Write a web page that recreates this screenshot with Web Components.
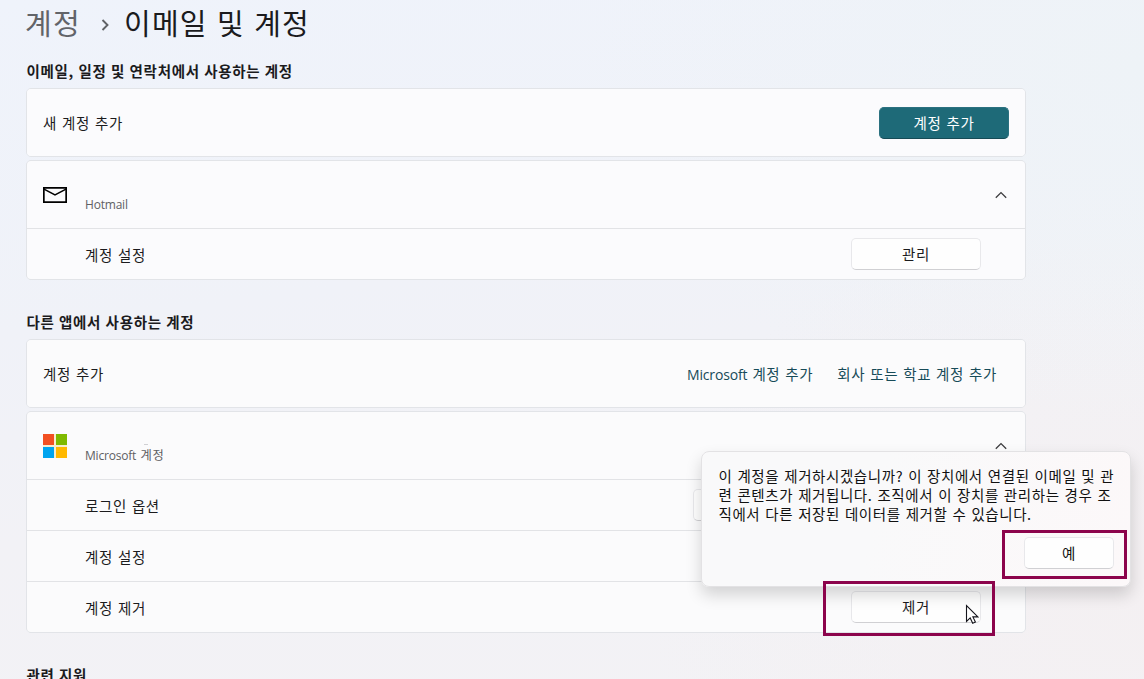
<!DOCTYPE html>
<html lang="ko">
<head>
<meta charset="utf-8">
<title>이메일 및 계정</title>
<style>
	html, body { height: 100%; }
	body {
		margin: 0;
		overflow: hidden;
		font: 14.5px/20px "Noto Sans CJK KR", sans-serif;
		letter-spacing: .62px;
		word-spacing: .35px;
		color: #1b1b1d;
	}
	.latin {
		font-family: "Open Sans", "Noto Sans", sans-serif;
		font-size: 14px;
		letter-spacing: -.15px;
	}
	small .latin { font-size: 12px; letter-spacing: -.2px; }
	small {
		font-size: 12.3px;
		line-height: 16px;
		letter-spacing: .5px;
		word-spacing: .5px;
		color: #606063;
	}
</style>
</head>
<body>
<settings-page>
	<bread-crumb slot="title" parent="계정">이메일 및 계정</bread-crumb>

	<settings-group heading="이메일, 일정 및 연락처에서 사용하는 계정">
		<settings-card>
			<settings-row size="large">새 계정 추가
				<push-button slot="action" kind="accent">계정 추가</push-button>
			</settings-row>
		</settings-card>
		<settings-card>
			<settings-row size="large" open>
				<mail-icon slot="icon"></mail-icon>
				<small><span class="latin">Hotmail</span></small>
			</settings-row>
			<settings-row indent>계정 설정
				<push-button slot="action">관리</push-button>
			</settings-row>
		</settings-card>
	</settings-group>

	<settings-group heading="다른 앱에서 사용하는 계정" style="--card: #fbfbfc">
		<settings-card>
			<settings-row size="large">계정 추가
				<text-link slot="action"><span class="latin">Microsoft</span> 계정 추가</text-link>
				<text-link slot="action">회사 또는 학교 계정 추가</text-link>
			</settings-row>
		</settings-card>
		<settings-card>
			<settings-row size="large" open>
				<microsoft-icon slot="icon"></microsoft-icon>
				<small><span class="latin">Microsoft</span> 계정</small>
			</settings-row>
			<settings-row indent>로그인 옵션
				<push-button slot="action" style="--width: 288px"></push-button>
			</settings-row>
			<settings-row indent>계정 설정</settings-row>
			<settings-row indent>계정 제거
				<push-button slot="action">제거</push-button>
			</settings-row>
		</settings-card>
	</settings-group>

	<settings-group heading="관련 지원"></settings-group>

	<name-remnant slot="overlay" style="left: 144px; top: 444px"></name-remnant>
	<confirm-flyout slot="overlay">
		이 계정을 제거하시겠습니까? 이 장치에서 연결된 이메일 및 관<br>련 콘텐츠가 제거됩니다. 조직에서 이 장치를 관리하는 경우 조<br>직에서 다른 저장된 데이터를 제거할 수 있습니다.
		<push-button slot="action" style="--width: 90px; line-height: 18px">예</push-button>
	</confirm-flyout>
	<focus-frame slot="overlay" style="left: 1002px; top: 530px; width: 125px; height: 49px"></focus-frame>
	<focus-frame slot="overlay" style="left: 823px; top: 581px; width: 172px; height: 55px"></focus-frame>
	<mouse-pointer slot="overlay" style="left: 965px; top: 604px"></mouse-pointer>
</settings-page>

<script>
const define = (name, render) =>
	!customElements.get(name) &&
	customElements.define(
		name,
		class extends HTMLElement {
			constructor() {
				super()
				this.sr = this.attachShadow({ mode: 'open' })
			}

			connectedCallback() {
				this.sr.innerHTML = render(this)
			}
		}
	)

define('settings-page', () => /* html */ `
	<style>
		:host {
			display: block;
			position: relative;
			box-sizing: border-box;
			height: 100%;
			overflow: hidden;
			padding: 0 118px 0 26px;
			background:
				radial-gradient(ellipse 560px 360px at 100% 10%, #eef3f7, rgba(238, 243, 247, 0)),
				radial-gradient(ellipse 500px 380px at 100% 85%, #f4f0f2, rgba(244, 240, 242, 0)),
				linear-gradient(172deg, #eff3fb 0, #f0f2f8 40%, #f2f2f6 65%, #f3f2f5);
		}
		main { display: flex; flex-direction: column; gap: 33px }
	</style>
	<slot name="title"></slot>
	<main><slot></slot></main>
	<slot name="overlay"></slot>
`)

define('bread-crumb', (el) => /* html */ `
	<style>
		:host {
			display: flex;
			align-items: center;
			height: 44px;
			margin-bottom: 17px;
			font-size: 29px;
			line-height: 44px;
			letter-spacing: 1.2px;
			word-spacing: 0;
			white-space: nowrap;
		}
		.parent { color: #626469; width: 75px; text-indent: -1px }
		svg { width: 8px; height: 12px; margin-right: 15px; margin-top: 6px }
	</style>
	<span class="parent">${el.getAttribute('parent')}</span>
	<svg viewBox="0 0 8 12" fill="none" stroke="#606266" stroke-width="1.9"><path d="M1.5 1 6.5 6l-5 5"/></svg>
	<slot></slot>
`)

define('settings-group', (el) => /* html */ `
	<style>
		:host { display: block }
		h2 {
			margin: 0;
			padding: 0 0 7px .5px;
			font-size: 14.5px;
			font-weight: bold;
			line-height: 20px;
			letter-spacing: .7px;
			word-spacing: -.3px;
			white-space: nowrap;
		}
		:host(:not(:first-of-type)) h2 { margin-top: -1px }
		div { display: flex; flex-direction: column; gap: 3px }
	</style>
	<h2>${el.getAttribute('heading')}</h2>
	<div><slot></slot></div>
`)

define('settings-card', () => /* html */ `
	<style>
		:host {
			display: flex;
			flex-direction: column;
			gap: 1px;
			border: 1px solid #e2e4e8;
			border-radius: 5px;
			overflow: hidden;
			background: #e2e3e6;
		}
	</style>
	<slot></slot>
`)

define('settings-row', (el) => /* html */ `
	<style>
		:host {
			display: flex;
			align-items: center;
			box-sizing: border-box;
			height: 50px;
			padding: 0 44px 0 16px;
			background: var(--card, #fbfbfd);
		}
		:host([size=large]) { height: 67px; padding-right: 16px }
		:host([indent]) { padding-left: 58px }
		.label { flex: 1; padding-top: 1px; white-space: nowrap }
		:host([open]) .label { padding: 17px 0 0 18px }
		.chevron { width: 12px; height: 8px; margin-right: 2px }
	</style>
	<slot name="icon"></slot>
	<div class="label"><slot></slot></div>
	<slot name="action"></slot>
	${el.hasAttribute('open') ? `<svg class="chevron" viewBox="0 0 12 8" fill="none" stroke="#3c3c3e" stroke-width="1.3"><path d="m.8 6.8 5.2-5.2 5.2 5.2"/></svg>` : ''}
`)

define('push-button', () => /* html */ `
	<style>
		:host { display: block }
		button {
			display: block;
			box-sizing: border-box;
			width: var(--width, 130px);
			height: 32px;
			padding: 0;
			border: 1px solid #e8e8eb;
			border-bottom-color: #d0d0d3;
			border-radius: 5px;
			background: #fefefe;
			color: inherit;
			font: inherit;
			letter-spacing: inherit;
			word-spacing: inherit;
		}
		:host([kind=accent]) button {
			background: #1e6a78;
			border-color: #2b7180;
			border-bottom-color: #164b56;
			color: #fff;
		}
	</style>
	<button><slot></slot></button>
`)

define('text-link', () => /* html */ `
	<style>
		:host { display: block; margin-right: 12px; padding: 1px 0 0 12px; color: #174b58; white-space: nowrap }
	</style>
	<slot></slot>
`)

define('mail-icon', () => /* html */ `
	<style>
		:host { display: block; width: 24px; height: 16px }
		svg { display: block }
	</style>
	<svg width="24" height="16" fill="none" stroke="#000">
		<path stroke-width="1.7" d="M.85.85h22.3v14.3H.85z"/>
		<path stroke-width="1.5" d="m1 2.2 11 5.8 11-5.8"/>
	</svg>
`)

define('microsoft-icon', () => /* html */ `
	<style>
		:host {
			display: grid;
			grid-template: 11px 11px / 11px 11px;
			gap: 2px;
			width: 24px;
			height: 24px;
			background: #f6edcf;
		}
	</style>
	<i style="background: #f25022"></i>
	<i style="background: #7fba00"></i>
	<i style="background: #00a4ef"></i>
	<i style="background: #ffb900"></i>
`)

define('name-remnant', () => /* html */ `
	<style>
		:host { position: absolute; width: 4px; height: 1px; background: #d0d0d3 }
	</style>
`)

define('confirm-flyout', () => /* html */ `
	<style>
		:host {
			position: absolute;
			left: 701px;
			top: 451px;
			box-sizing: border-box;
			width: 430px;
			height: 136px;
			padding: 14px 16px 17px 16.5px;
			display: flex;
			flex-direction: column;
			justify-content: space-between;
			border: 1px solid #e3e2e4;
			border-radius: 8px;
			background: linear-gradient(100deg, #f9f9fa 40%, #fcf8f9);
			box-shadow: 0 8px 16px rgba(0, 0, 0, .16);
			line-height: 19px;
			letter-spacing: .59px;
			white-space: nowrap;
			color: #111;
		}
		footer { display: flex; justify-content: flex-end }
	</style>
	<div><slot></slot></div>
	<footer><slot name="action"></slot></footer>
`)

define('focus-frame', () => /* html */ `
	<style>
		:host { position: absolute; box-sizing: border-box; border: 3px solid #8c044c }
	</style>
`)

define('mouse-pointer', () => /* html */ `
	<style>
		:host { position: absolute; width: 14px; height: 21px }
		svg { display: block }
	</style>
	<svg width="14" height="21"><path d="M1.5 1.5v16l3.7-3.6 2.5 5.4 2.7-1.2-2.5-5.2h5z" fill="#fff" stroke="#15151c" stroke-width="1.1"/></svg>
`)
</script>
</body>
</html>
